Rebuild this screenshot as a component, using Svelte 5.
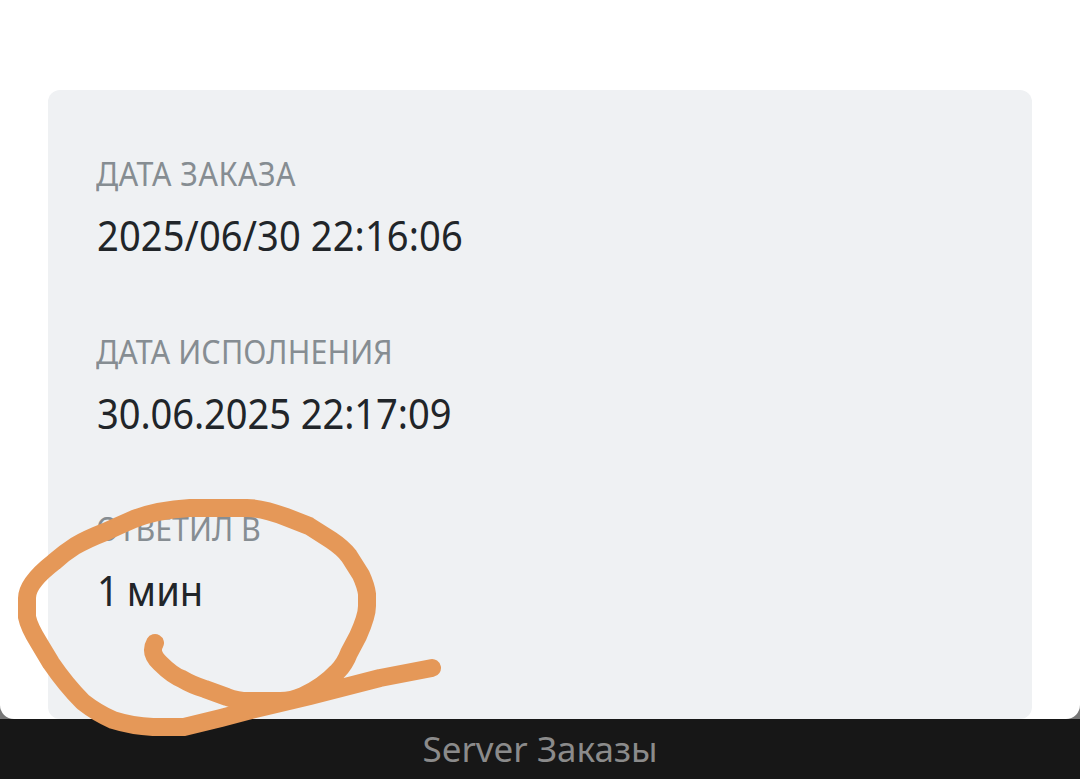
<script lang="ts">
	interface Row {
		label: string;
		value: string;
		key: string;
	}

	const rows: Row[] = [
		{ key: 'ordered', label: 'Дата заказа', value: '2025/06/30 22:16:06' },
		{ key: 'completed', label: 'Дата исполнения', value: '30.06.2025 22:17:09' },
		{ key: 'answered', label: 'Ответил в', value: '1 мин' }
	];
</script>

<div class="screen">
	<main class="sheet">
		<dl class="card">
			{#each rows as row (row.key)}
				<div class="row row--{row.key}">
					<dt>{row.label}</dt>
					<dd>{row.value}</dd>
				</div>
			{/each}
		</dl>
	</main>

	<footer class="caption"><span>Server Заказы</span></footer>

	<!-- Marker stroke around the response time -->
	<svg class="marker" viewBox="0 0 1080 779" aria-hidden="true">
		<path
			d="M155 643 C151 650 153 656 160 663 C167 670 174 676 182 679 Q192 685 205 689 L227 697 Q237 701 249 701 L280 701 Q292 701 303 696 Q323 687 337 672 Q345 664 349 653 L358 636 Q367 616 367 606 L367 594 Q366 586 361 575 L349 556 Q343 548 331 540 L309 526 L286 517 Q262 508 247 508 L190 508 Q157 510 134 519 Q118 526 105 532 Q87 539 75 546 Q64 553 54 562 Q27 583 27 598 L27 617 Q29 627 39 643 L51 663 Q66 685 83 702 Q97 713 113 720 Q132 726 153 727 L184 727 L221 718 L251 710 L310 696 L380 678 L432 668"
		/>
	</svg>
</div>

<style>
	:global(body) {
		margin: 0;
		background: #171717;
	}

	.screen {
		position: relative;
		display: flex;
		flex-direction: column;
		height: 779px;
		overflow: hidden;
		font-family: 'Noto Sans', 'Open Sans', sans-serif;
		background: linear-gradient(#777 719px, #171717 719px);
	}

	.sheet {
		box-sizing: border-box;
		height: 719px;
		padding: 90px 48px 0;
		background: #fff;
		border-radius: 0 0 14px 14px;
	}

	.card {
		box-sizing: border-box;
		height: 629px;
		margin: 0;
		padding: 60px 48px 0;
		background: #eff1f3;
		border-radius: 12px;
	}

	.row {
		height: 177.5px;
	}

	dt,
	dd {
		width: max-content;
		margin: 0;
		white-space: nowrap;
		transform-origin: left;
	}

	dt {
		font-size: 32px;
		line-height: 48px;
		color: #868d92;
		text-transform: uppercase;
		transform: scaleX(0.95);
	}

	dd {
		margin: 9px 0 0 1px;
		font-size: 41px;
		line-height: 56px;
		color: #212529;
		transform: scaleX(0.93);
	}

	.row--ordered dt {
		letter-spacing: 0.6px;
	}

	.row--ordered dd {
		letter-spacing: 0.1px;
	}

	.row--completed dt {
		letter-spacing: 0.15px;
	}

	.row--completed dd {
		letter-spacing: -0.1px;
	}

	.row--answered dd {
		word-spacing: -2px;
	}

	.caption {
		display: flex;
		justify-content: center;
		height: 60px;
		font-size: 35px;
		line-height: 60px;
		color: #8b8b8b;
	}

	.marker {
		position: absolute;
		inset: 0;
		width: 1080px;
		height: 779px;
		pointer-events: none;
	}

	.marker path {
		fill: none;
		stroke: #e59858;
		stroke-width: 18;
		stroke-linecap: round;
		stroke-linejoin: round;
	}
</style>
